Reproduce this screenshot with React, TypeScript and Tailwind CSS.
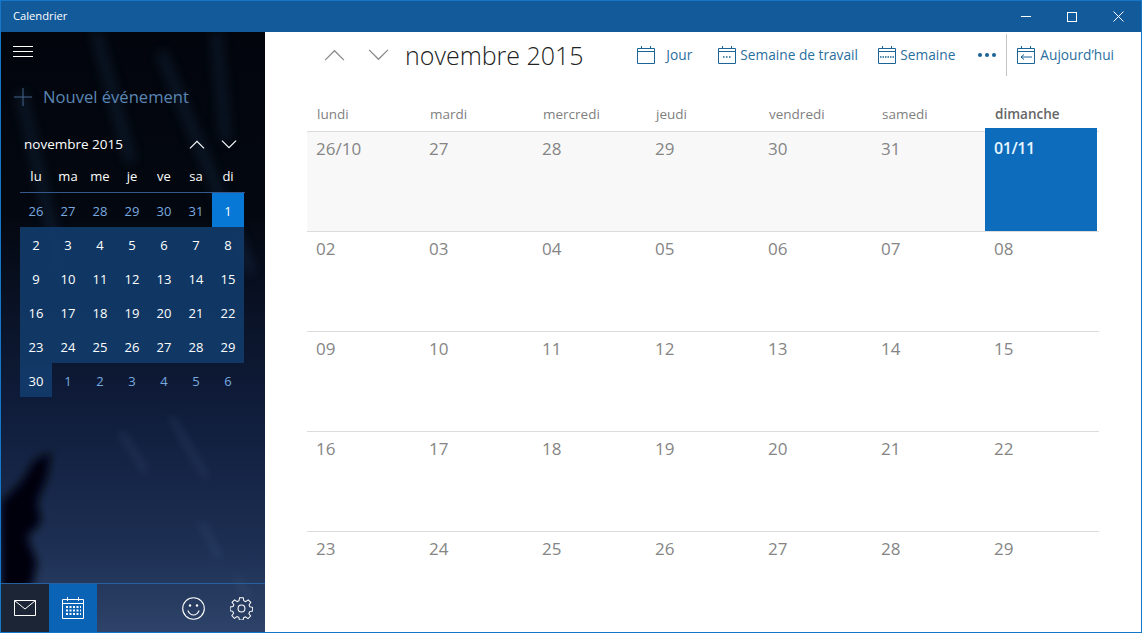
const font = { fontFamily: '"Open Sans", "Noto Sans", sans-serif' };

const joursMini = ["lu", "ma", "me", "je", "ve", "sa", "di"];
const miniSemaines = [
  ["26", "27", "28", "29", "30", "31", "1"],
  ["2", "3", "4", "5", "6", "7", "8"],
  ["9", "10", "11", "12", "13", "14", "15"],
  ["16", "17", "18", "19", "20", "21", "22"],
  ["23", "24", "25", "26", "27", "28", "29"],
  ["30", "1", "2", "3", "4", "5", "6"],
];
const jours = ["lundi", "mardi", "mercredi", "jeudi", "vendredi", "samedi", "dimanche"];
const semaines = [
  ["26/10", "27", "28", "29", "30", "31", "01/11"],
  ["02", "03", "04", "05", "06", "07", "08"],
  ["09", "10", "11", "12", "13", "14", "15"],
  ["16", "17", "18", "19", "20", "21", "22"],
  ["23", "24", "25", "26", "27", "28", "29"],
];

const Chevron = ({ up, className, trait = 1.4 }: { up?: boolean; className: string; trait?: number }) => (
  <svg viewBox="0 0 24 14" className={className} fill="none" stroke="currentColor" strokeWidth={trait}>
    <path d={up ? "M1 13 L12 2 L23 13" : "M1 1 L12 12 L23 1"} />
  </svg>
);

const CalIcon = ({ children }: { children?: React.ReactNode }) => (
  <svg width="18" height="18" viewBox="0 0 18 18" fill="none" stroke="#1a6496" strokeWidth="1" className="shrink-0">
    <path d="M.5 2.500h17v15H.5z" />
    <path d="M.5 5.500h17M4.500 0v3M13.500 0v3" />
    {children}
  </svg>
);

const BoutonVue = ({ label, icon, gap, width }: { label: string; icon: React.ReactNode; gap: string; width: string }) => (
  <div className={`flex items-center ${gap} ${width} text-[13.7px] text-[#2a6f9e]`}>
    {icon}
    <span className="whitespace-nowrap">{label}</span>
  </div>
);

const Sidebar = () => (
  <div className="relative flex w-[264px] shrink-0 flex-col overflow-hidden bg-[linear-gradient(180deg,#02050c_0%,#03070f_30%,#0f1c3a_62%,#1c2e52_85%,#2e4369_100%)] text-white">
    {/* fond photo */}
    <svg className="absolute inset-0 h-full w-full" viewBox="0 0 264 600" preserveAspectRatio="none">
      <defs>
        <filter id="flou" x="-50%" y="-50%" width="200%" height="200%">
          <feGaussianBlur stdDeviation="6" />
        </filter>
        <filter id="flou2" x="-50%" y="-50%" width="200%" height="200%">
          <feGaussianBlur stdDeviation="4" />
        </filter>
      </defs>
      <g filter="url(#flou)" stroke="#2b4f7c" strokeWidth="9" opacity="0.28">
        <path d="M95 0 L130 130" />
        <path d="M215 0 L225 110" />
        <path d="M160 20 L250 240" />
        <path d="M20 60 L60 240" />
      </g>
      <g filter="url(#flou2)" stroke="#6f8db6" strokeWidth="4" opacity="0.2">
        <path d="M170 385 L205 445" />
        <path d="M120 400 L145 440" />
        <path d="M200 490 L218 525" />
        <path d="M235 545 L247 565" />
      </g>
      <path
        filter="url(#flou2)"
        fill="#03050b"
        d="M0 470 L20 450 L34 428 L50 420 L46 445 L36 470 L40 490 L26 505 L36 530 L32 552 L16 565 L18 600 L0 600 Z"
      />
    </svg>

    <div className="relative flex flex-1 flex-col">
      <div className="flex h-[38px] items-center px-3 pt-px">
        <div className="flex h-[11px] w-5 flex-col justify-between">
          <div className="h-px bg-white" />
          <div className="h-px bg-white" />
          <div className="h-px bg-white" />
        </div>
      </div>
      <div className="mt-[7px] flex h-[40px] items-center px-[13px] text-[#5b86b3]">
        <svg width="18" height="18" viewBox="0 0 18 18" stroke="#44658b" strokeWidth="1" className="shrink-0">
          <path d="M9 0v18M0 9h18" />
        </svg>
        <span className="ml-[11px] text-[16.6px]">Nouvel événement</span>
      </div>
      <div className="mt-[13px] flex h-[28px] items-center pl-[23px]">
        <span className="w-[165px] text-[13.5px]">novembre 2015</span>
        <Chevron up trait={1.8} className="h-[9px] w-[16px]" />
        <Chevron trait={1.8} className="ml-[16px] h-[9px] w-[16px]" />
      </div>
      <div className="ml-[19px] mt-[3px] w-[225px]">
        <div className="grid h-[32px] grid-cols-[repeat(7,32px)] items-center border-b border-[#34588c] text-center text-[13px]">
          {joursMini.map((j) => (
            <span key={j}>{j}</span>
          ))}
        </div>
        <div className="grid grid-cols-[repeat(7,32px)] text-center text-[13px]">
          {miniSemaines.flatMap((semaine, r) =>
            semaine.map((d, c) => {
              const horsMois = (r === 0 && c < 6) || (r === 5 && c > 0);
              const auj = r === 0 && c === 6;
              return (
                <div
                  key={`${r}-${c}`}
                  className={`flex h-[34px] items-center justify-center pt-[4px] ${
                    auj ? "bg-[#0878d6]" : horsMois ? "text-[#78aae0]" : "bg-[#123c6c]/90"
                  }`}
                >
                  {d}
                </div>
              );
            })
          )}
        </div>
      </div>
    </div>

    <div className="relative flex h-[49px] items-stretch border-t border-[#27609e]">
      <div className="flex w-[48px] items-center justify-center bg-[#1c2536]">
        <svg width="22" height="16" viewBox="0 0 22 16" fill="none" stroke="white" strokeWidth="1">
          <path d="M.5.5h21v15H.5z" />
          <path d="M.5.5 L11 9 L21.5.5" />
        </svg>
      </div>
      <div className="flex w-[48px] items-center justify-center bg-[#0b63b5]">
        <svg width="22" height="22" viewBox="0 0 22 22" fill="none" stroke="white" strokeWidth="1">
          <path d="M.5 2.5h21v19H.5zM.5 6.5h21M5.5 0v4M16.5 0v4" />
          <path strokeWidth="2" strokeDasharray="2 1.5" d="M4 10h15M4 13.5h15M4 17h15" />
        </svg>
      </div>
      <div className="flex-1" />
      <div className="flex w-[48px] items-center justify-center">
        <svg width="23" height="23" viewBox="0 0 23 23" fill="none" stroke="white" strokeWidth="1.1">
          <circle cx="11.5" cy="11.5" r="10.8" />
          <path d="M5.8 13.5c1.5 3.2 3.5 4.5 5.7 4.5s4.2-1.300 5.700-4.500" />
          <circle cx="8" cy="8.500" r="1.200" fill="white" stroke="none" />
          <circle cx="15" cy="8.500" r="1.200" fill="white" stroke="none" />
        </svg>
      </div>
      <div className="flex w-[48px] items-center justify-center">
        <svg width="23" height="23" viewBox="0 0 24 24" fill="none" stroke="white" strokeWidth="1.100">
          <circle cx="12" cy="12" r="3.600" />
          <path d="M10 1h4l.6 3.200 2 .9L19.400 3.200l2.800 2.800-1.900 2.800.9 2 3 .6v4l-3.200.6-.9 2 1.900 2.800-2.800 2.800-2.800-1.900-2 .9-.6 2.600h-4l-.6-2.900-2-.9-2.800 1.900-2.800-2.800 1.900-2.800-.9-2-2.900-.6v-4l3.200-.6.9-2L1.800 6l2.800-2.800 2.800 1.900 2-.9z" transform="translate(0 -.5) scale(.96) translate(.4 .4)" />
        </svg>
      </div>
    </div>
  </div>
);

const Toolbar = () => (
  <div className="flex h-[68px] items-start">
    <div className="ml-[58px] mt-[17px] flex items-center text-[#888]">
      <Chevron up className="h-[12px] w-[23px]" />
      <Chevron className="ml-[21px] h-[12px] w-[23px]" />
    </div>
    <div className="ml-[15px] mt-[5px] text-[25px] font-light text-[#222]">novembre 2015</div>
    <div className="ml-auto mt-[11px] flex items-center pr-[27px]">
      <BoutonVue label="Jour" gap="gap-[11px]" width="w-[81px]" icon={<CalIcon />} />
      <BoutonVue
        label="Semaine de travail"
        gap="gap-[4px]"
        width="w-[160px]"
        icon={
          <CalIcon>
            <path strokeDasharray="1.500 1.500" strokeWidth="1.500" d="M5 11h8" />
          </CalIcon>
        }
      />
      <BoutonVue
        label="Semaine"
        gap="gap-[4px]"
        width="w-[100px]"
        icon={
          <CalIcon>
            <path strokeDasharray="1.500 1" strokeWidth="1.500" d="M2 11h14" />
          </CalIcon>
        }
      />
      <div className="flex w-[28px] gap-[3px]">
        <span className="h-[4px] w-[4px] rounded-full bg-[#1a6496]" />
        <span className="h-[4px] w-[4px] rounded-full bg-[#1a6496]" />
        <span className="h-[4px] w-[4px] rounded-full bg-[#1a6496]" />
      </div>
      <div className="-my-[9px] mr-[10px] h-[42px] w-px bg-[#c4c4c4]" />
      <BoutonVue
        label="Aujourd’hui"
        gap="gap-[5px]"
        width="w-auto"
        icon={
          <CalIcon>
            <path d="M15 11H4M7 8.500 4 11l3 2.500" />
          </CalIcon>
        }
      />
    </div>
  </div>
);

const Grille = () => (
  <div className="ml-[42px] mr-[42px] flex-1">
    <div className="grid h-[31px] grid-cols-[repeat(6,113px)_114px] items-center">
      {jours.map((j, i) => (
        <span
          key={j}
          className={`-mt-[2px] pl-[10px] text-[13.5px] ${i === 6 ? "font-semibold text-[#666]" : "text-[#808080]"}`}
        >
          {j}
        </span>
      ))}
    </div>
    {semaines.map((semaine, r) => (
      <div key={r} className="grid h-[100px] grid-cols-[repeat(6,113px)_114px] border-t border-[#dcdcdc]">
        {semaine.map((d, c) => {
          const auj = r === 0 && c === 6;
          return (
            <div
              key={d + c}
              className={`pl-[9px] ${
                auj
                  ? "relative -mt-[4px] mr-[2px] bg-[#0e6cbd] pt-[8px] text-[16px] font-semibold tracking-tight text-[#e6f6ff]"
                  : r === 0
                    ? "bg-[#f8f8f8] pt-[4px] text-[17px] text-[#858585]"
                    : "pt-[4px] text-[17px] text-[#858585]"
              }`}
            >
              {d}
            </div>
          );
        })}
      </div>
    ))}
  </div>
);

export default function App() {
  return (
    <div
      className="flex h-[633px] w-[1142px] flex-col overflow-hidden border border-t-0 border-[#1577c9] bg-white"
      style={font}
    >
      <div className="flex h-[32px] shrink-0 items-center border-t border-[#1577c9] bg-[#135a9b] pl-[12px] text-white">
        <span className="-mt-[1px] text-[11.2px]">Calendrier</span>
        <div className="ml-auto flex items-center">
          <div className="flex w-[46px] justify-center">
            <div className="h-px w-[10px] bg-white" />
          </div>
          <div className="flex w-[46px] justify-center">
            <div className="h-[10px] w-[10px] border border-white" />
          </div>
          <div className="flex w-[46px] justify-center">
            <svg width="11" height="11" viewBox="0 0 11 11" stroke="white" strokeWidth="1">
              <path d="M.5.5l10 10M10.500.5l-10 10" />
            </svg>
          </div>
        </div>
      </div>
      <div className="flex min-h-0 flex-1">
        <Sidebar />
        <div className="flex flex-1 flex-col bg-white">
          <Toolbar />
          <Grille />
        </div>
      </div>
    </div>
  );
}
